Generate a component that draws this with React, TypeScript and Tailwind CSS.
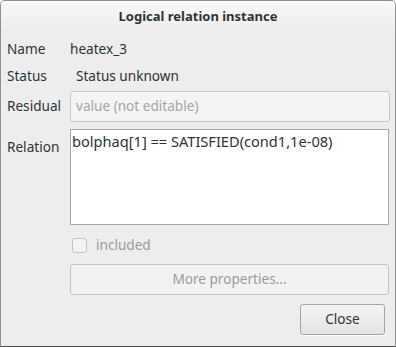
import React from "react";

export default function App() {
  return (
    <div className="w-[396px] h-[347px] bg-[#ededed] flex flex-col border border-[#8f8f8f] border-b-[#4a4a4a] rounded-t-[5px] overflow-hidden text-[13.6px] text-[#2e3436]" style={{ fontFamily: '"Noto Sans", "Open Sans", sans-serif' }}>
      <div className="h-[31px] shrink-0 flex items-center justify-center font-bold text-[13px] bg-gradient-to-b from-[#f8f8f8] to-[#ededed]">
        Logical relation instance
      </div>
      <div className="flex flex-col px-[6px] pt-[3px]">
        <div className="flex items-center h-[28px]">
          <span className="w-[63px]">Name</span>
          <span>heatex_3</span>
        </div>
        <div className="flex items-center h-[26px]">
          <span className="w-[69px]">Status</span>
          <span>Status unknown</span>
        </div>
        <div className="flex items-center mt-[2px]">
          <span className="w-[63px]">Residual</span>
          <div className="flex-1 h-[31px] mr-[-1px] rounded-[3px] border border-[#c7c7c4] bg-[#f4f4f4] flex items-center px-[5px] text-[#a4a6a6]">
            value (not editable)
          </div>
        </div>
        <div className="flex items-start mt-[7px]">
          <span className="w-[63px] pt-[8px]">Relation</span>
          <div className="flex-1 h-[96px] border border-[#a8a8a8] bg-white px-[1px] pt-[1px] leading-[20px] text-[14.6px]">
            bolphaq[1] == SATISFIED(cond1,1e-08)
          </div>
        </div>
        <div className="flex items-center mt-[12px] pl-[65px] h-[16px]">
          <span className="w-[15px] h-[15px] rounded-[3px] border border-[#c4c4c2] bg-[#f3f3f3]" />
          <span className="ml-[9px] text-[#9a9c9c]">included</span>
        </div>
        <div className="ml-[63px] mt-[11px] h-[31px] rounded-[3px] border border-[#c3c3c1] bg-[#f2f2f2] flex items-center justify-center text-[#9a9c9c]">
          More properties...
        </div>
        <div className="flex justify-end mt-[9px] pr-[4px]">
          <div className="w-[85px] h-[31px] rounded-[3px] border border-[#a5a5a5] bg-gradient-to-b from-[#f4f4f4] to-[#e4e4e4] flex items-center justify-center shadow-[0_1px_0_rgba(255,255,255,0.8)]">
            Close
          </div>
        </div>
      </div>
    </div>
  );
}
